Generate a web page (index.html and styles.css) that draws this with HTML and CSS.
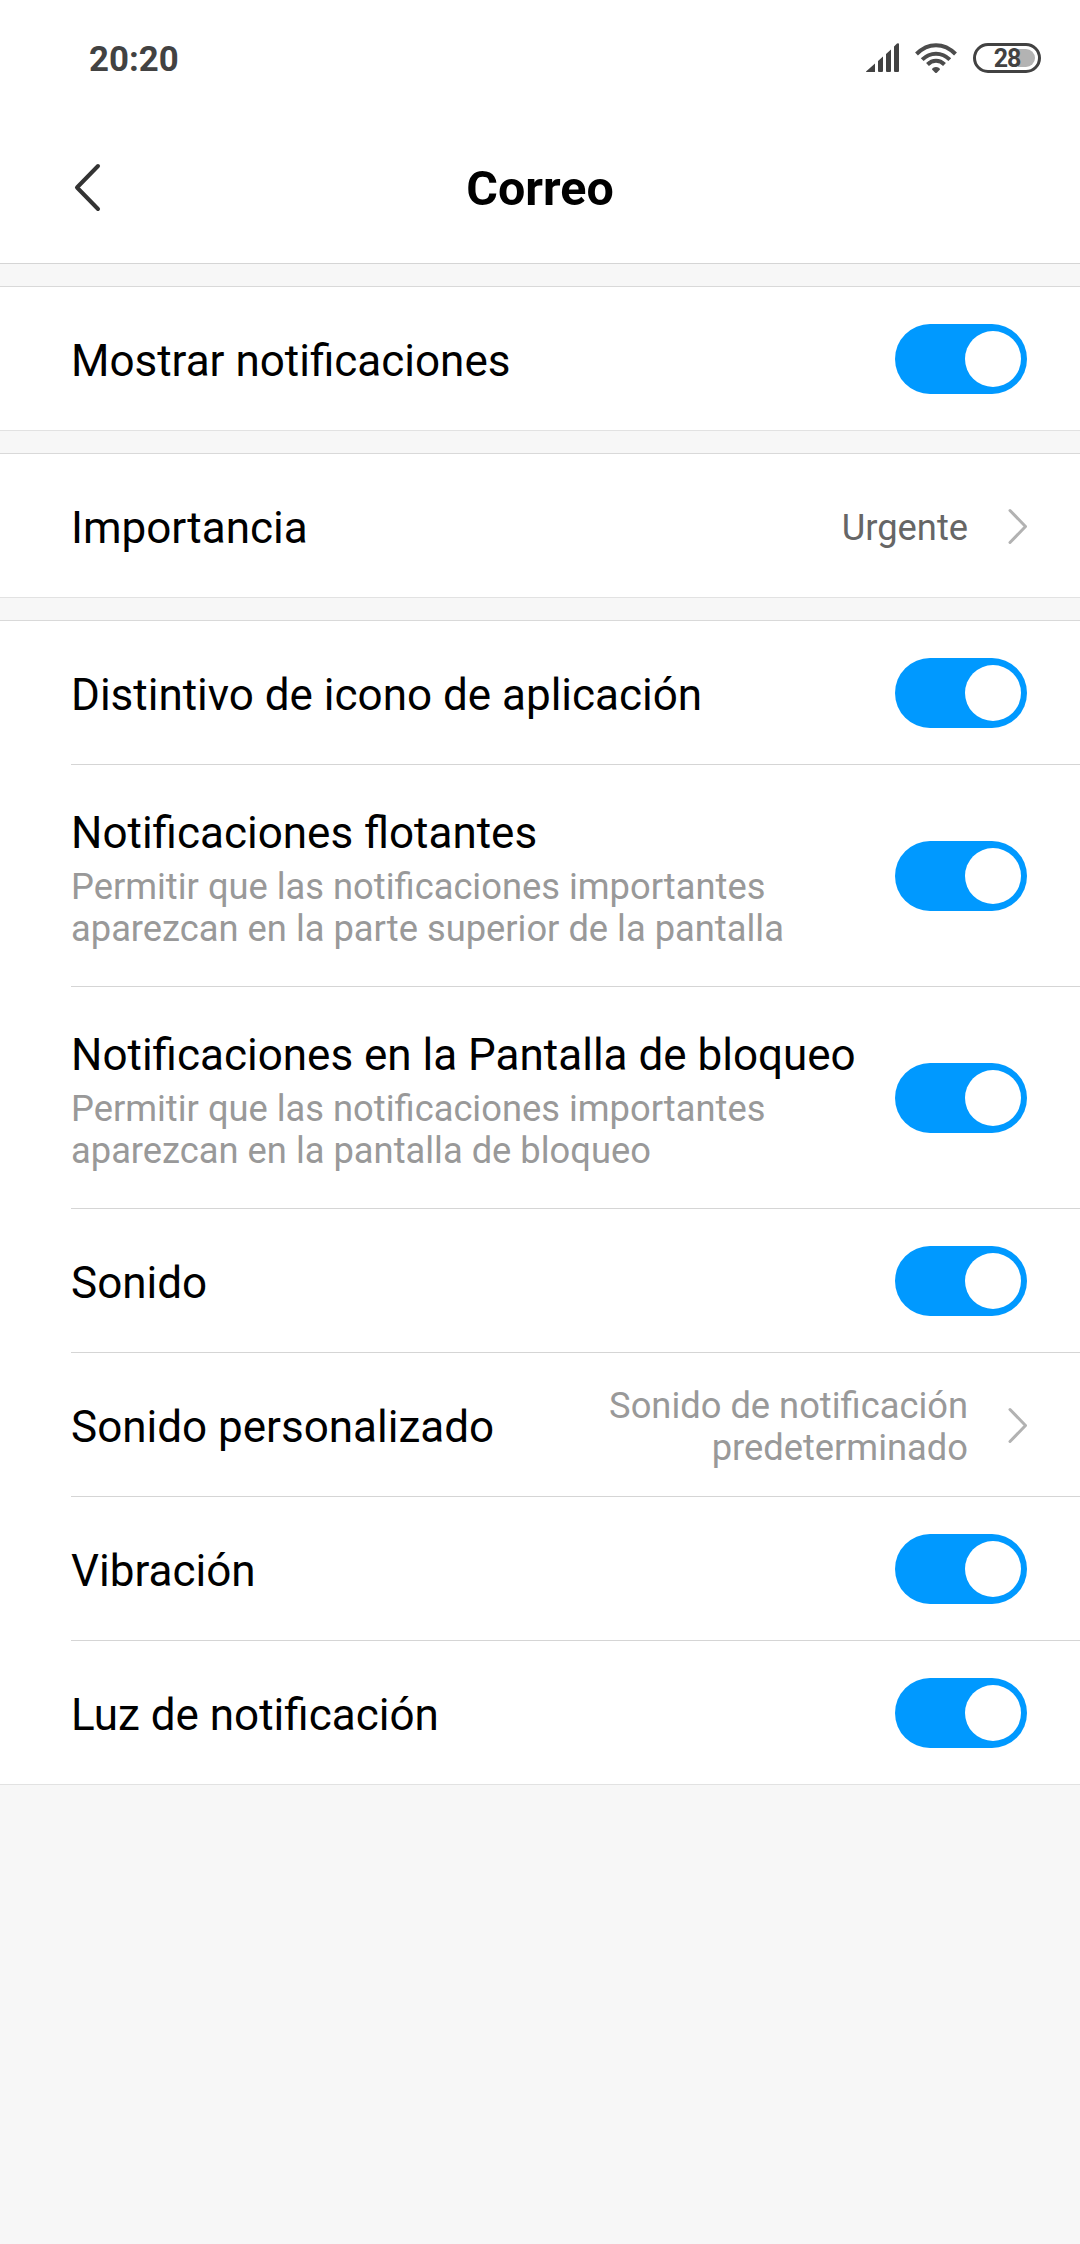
FILE: index.html
```html
<!DOCTYPE html>
<html lang="es">
<head>
<meta charset="utf-8">
<title>Correo</title>
<link rel="stylesheet" href="styles.css">
</head>
<body>
<header class="top">
  <div class="status">
    <span class="clock">20:20</span>
    <div class="status-icons">
      <svg class="signal" width="34" height="30" viewBox="0 0 34 30" fill="#424242">
        <path d="M0 28.500 9 20.500V29H1Q0 29 0 28.500ZM12 18 17 13.500V28q0 1-1 1h-3q-1 0-1-1ZM20 11 25 6.500V28q0 1-1 1h-3q-1 0-1-1ZM28 3.500 31 .5q2-1 2 1V28q0 1-1 1h-3q-1 0-1-1Z"/>
      </svg>
      <svg class="wifi" width="42" height="30" viewBox="0 0 42 30" fill="none" stroke="#4c4c4c" stroke-width="4">
        <path d="M1.500 11C13-.8 29-.8 40.500 11M7.200 16.700c8-8 19.600-8 27.600 0M12.500 21.500c5-5 12-5 17 0"/>
        <path d="M21 24c2 0 4 1 4 2.500L21.800 29.700q-.8.6-1.600 0L17 26.500C17 25 19 24 21 24Z" fill="#4c4c4c" stroke="none"/>
      </svg>
      <div class="battery"><span class="battery-level"></span><span class="battery-text">28</span></div>
    </div>
  </div>
  <div class="titlebar">
    <svg class="back" width="28" height="50" viewBox="0 0 28 50" fill="none" stroke="#333" stroke-width="4" stroke-linecap="round" stroke-linejoin="round"><path d="M25 3 4 24.500 25 46"/></svg>
    <h1>Correo</h1>
  </div>
</header>
<main>
  <section class="group">
    <div class="row"><div class="label">Mostrar notificaciones</div><span class="toggle"></span></div>
  </section>
  <section class="group">
    <div class="row"><div class="label">Importancia</div><div class="value strong">Urgente</div>
      <svg class="chevron" width="20" height="36" viewBox="0 0 20 36"><path d="M3 2.500 18.500 18.500 3 34.500"/></svg></div>
  </section>
  <section class="group">
    <div class="row"><div class="label">Distintivo de icono de aplicación</div><span class="toggle"></span></div>
    <div class="row tall"><div class="label">Notificaciones flotantes
      <p>Permitir que las notificaciones importantes<br>aparezcan en la parte superior de la pantalla</p></div><span class="toggle"></span></div>
    <div class="row tall"><div class="label">Notificaciones en la Pantalla de bloqueo
      <p>Permitir que las notificaciones importantes<br>aparezcan en la pantalla de bloqueo</p></div><span class="toggle"></span></div>
    <div class="row"><div class="label">Sonido</div><span class="toggle"></span></div>
    <div class="row"><div class="label">Sonido personalizado</div><div class="value">Sonido de notificación<br>predeterminado</div>
      <svg class="chevron" width="20" height="36" viewBox="0 0 20 36"><path d="M3 2.500 18.500 18.500 3 34.500"/></svg></div>
    <div class="row"><div class="label">Vibración</div><span class="toggle"></span></div>
    <div class="row"><div class="label">Luz de notificación</div><span class="toggle"></span></div>
  </section>
</main>
</body>
</html>
```
FILE: styles.css
```css
* { box-sizing: border-box; }
body {
  margin: 0;
  min-height: 2244px;
  background: #f7f7f7;
  color: #000;
  font-family: Roboto, "Liberation Sans", sans-serif;
}
.top {
  height: 264px;
  background: #fff;
  border-bottom: 1px solid #d5d5d5;
}
.status {
  height: 116px;
  padding: 0 39px 0 89px;
  display: flex;
  align-items: center;
  justify-content: space-between;
}
.clock {
  color: #424242;
  font-size: 34.8px;
  font-weight: 700;
  line-height: 40px;
  padding-top: 2px;
}
.status-icons { display: flex; align-items: center; }
.signal { margin-right: 15px; }
.wifi { margin-right: 16px; }
.battery {
  width: 68px;
  height: 30px;
  border: 3px solid #424242;
  border-radius: 15px;
  position: relative;
  display: flex;
  align-items: center;
  justify-content: center;
}
.battery-level {
  position: absolute;
  right: 3px;
  top: 3px;
  width: 17px;
  height: 18px;
  background: #b3b3b3;
  border-radius: 0 9px 9px 0;
}
.battery-text {
  position: relative;
  color: #424242;
  font-size: 25px;
  font-weight: 700;
  line-height: 24px;
  letter-spacing: -1px;
  padding-top: 2px;
}
.titlebar {
  height: 147px;
  display: grid;
  grid-template-columns: 102px 1fr 102px;
  align-items: center;
  padding-bottom: 3px;
}
.back { margin: 0 0 0 73px; }
h1 {
  margin: 0;
  padding-top: 1px;
  font-size: 48.4px;
  font-weight: 700;
  line-height: 56px;
  text-align: center;
}
main {
  display: flex;
  flex-direction: column;
  gap: 22px;
  padding-top: 22px;
}
.group {
  background: #fff;
  border-top: 1px solid #d9d9d9;
  border-bottom: 1px solid #e2e2e2;
}
.row {
  height: 143px;
  margin-left: 71px;
  padding-right: 53px;
  display: flex;
  align-items: center;
}
.row + .row { height: 144px; border-top: 1px solid #d5d5d5; }
.row + .tall { height: 222px; }
.label {
  flex: 1;
  white-space: nowrap;
  font-size: 44px;
  line-height: 52px;
  padding-top: 5px;
}
.label p {
  margin: 7px 0 0;
  color: #999;
  font-size: 36.3px;
  line-height: 42px;
}
.value {
  color: #999;
  font-size: 36.3px;
  line-height: 42px;
  text-align: right;
  margin-right: 39px;
  padding-top: 5px;
}
.strong { color: #666; }
.chevron {
  fill: none;
  stroke: #b2b2b2;
  stroke-width: 3;
  stroke-linecap: round;
  stroke-linejoin: round;
}
.toggle {
  width: 132px;
  height: 70px;
  padding: 7px 6px;
  border-radius: 35px;
  background: #0099ff;
  display: flex;
  justify-content: flex-end;
}
.toggle::before {
  content: "";
  width: 56px;
  height: 56px;
  border-radius: 50%;
  background: #fff;
}
```
